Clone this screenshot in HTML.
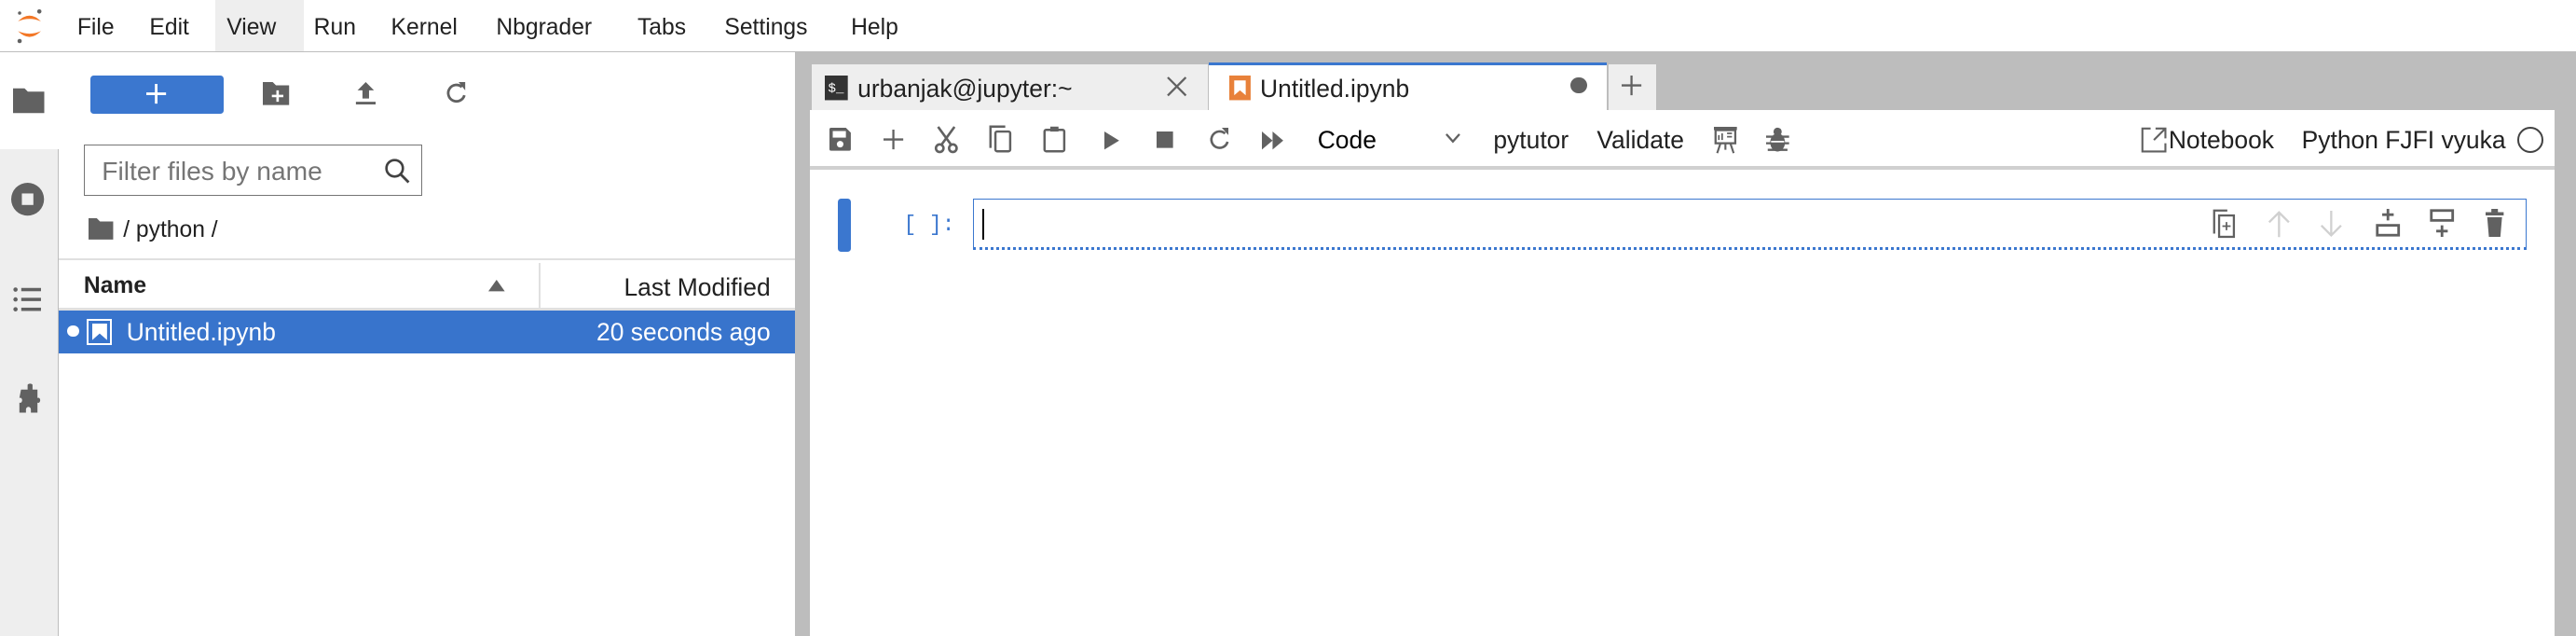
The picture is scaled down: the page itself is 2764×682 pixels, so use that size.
<!DOCTYPE html>
<html><head><meta charset="utf-8"><style>
html,body{margin:0;padding:0;width:2764px;height:682px;overflow:hidden;background:#fff}
#w{zoom:1.76276;width:1568px;height:387px;position:relative;font-family:"Liberation Sans",sans-serif;color:#212121}
.a{position:absolute}
.t{position:absolute;white-space:nowrap;font-size:14px;line-height:16px}
svg{position:absolute;overflow:visible}
</style></head><body><div id="w">
<div class="a" style="left:0;top:0;width:1568px;height:31px;background:#fff;border-bottom:1px solid #bdbdbd"></div>
<div class="a" style="left:131px;top:0;width:54px;height:31px;background:#eee"></div>
<svg style="left:8px;top:4px" width="20" height="24" viewBox="0 0 20 24"><path d="M3 9 Q10 2 17 9 Q10 6 3 9Z" fill="#f37726"/><path d="M3 15 Q10 22 17 15 Q10 18 3 15Z" fill="#f37726"/><circle cx="16" cy="3" r="1.3" fill="#616161"/><circle cx="4" cy="4" r="1" fill="#616161"/><circle cx="4" cy="21" r="1.3" fill="#616161"/></svg>
<div class="t" style="left:47px;top:9px">File</div>
<div class="t" style="left:91px;top:9px">Edit</div>
<div class="t" style="left:138px;top:9px">View</div>
<div class="t" style="left:191px;top:9px">Run</div>
<div class="t" style="left:238px;top:9px">Kernel</div>
<div class="t" style="left:302px;top:9px">Nbgrader</div>
<div class="t" style="left:388px;top:9px">Tabs</div>
<div class="t" style="left:441px;top:9px">Settings</div>
<div class="t" style="left:518px;top:9px">Help</div>
<div class="a" style="left:0;top:32px;width:36px;height:355px;background:#eee;border-right:1px solid #bdbdbd;box-sizing:border-box"></div>
<div class="a" style="left:0;top:32px;width:36px;height:59px;background:#fff"></div>
<svg style="left:8px;top:53px" width="19" height="16"><path d="M0 1h7l2 2h10v13H0z" fill="#616161"/></svg>
<svg style="left:7px;top:111px" width="20" height="20"><circle cx="10" cy="10" r="10" fill="#616161"/><rect x="6.5" y="6.5" width="7" height="7" fill="#eee"/></svg>
<svg style="left:8px;top:174px" width="18" height="16"><g fill="#616161"><circle cx="1.5" cy="2" r="1.3"/><circle cx="1.5" cy="8" r="1.3"/><circle cx="1.5" cy="14" r="1.3"/><rect x="5" y="1" width="12" height="2"/><rect x="5" y="7" width="12" height="2"/><rect x="5" y="13" width="12" height="2"/></g></svg>
<svg style="left:7px;top:232px" width="22" height="22" viewBox="0 0 22 22"><path d="M6 5h4v-3a2 2 0 0 1 3 0v3h3v5h1a2 2 0 0 1 0 3h-1v6h-4v-2a1.5 1.5 0 0 0-3 0v2h-4v-6h1a2 2 0 0 0 0-3h-1z" fill="#616161"/></svg>
<div class="a" style="left:55px;top:46px;width:81px;height:23px;background:#3b77cf;border-radius:2px"></div>
<svg style="left:89px;top:51px" width="12" height="12"><path d="M6 0v12M0 6h12" stroke="#fff" stroke-width="1.6"/></svg>
<svg style="left:160px;top:50px" width="16" height="14"><path d="M0 0h6l2 2h8v12H0z" fill="#616161"/><path d="M9 5v7M5.5 8.5h7" stroke="#fff" stroke-width="1.5"/></svg>
<svg style="left:216px;top:50px" width="13" height="14"><path d="M6.5 0l5 5h-3v5h-4v-5h-3z" fill="#616161"/><rect x="0.5" y="12" width="12" height="1.6" fill="#616161"/></svg>
<svg style="left:271px;top:50px" width="13" height="14"><path d="M10 3A5 5 0 1 0 11.5 8" fill="none" stroke="#616161" stroke-width="1.6"/><path d="M8 0h4v5z" fill="#616161"/></svg>
<div class="a" style="left:51px;top:88px;width:206px;height:31px;border:1px solid #757575;box-sizing:border-box"></div>
<div class="t" style="left:62px;top:96px;font-size:16px;color:#757575">Filter files by name</div>
<svg style="left:234px;top:96px" width="16" height="16"><circle cx="6.5" cy="6.5" r="5" fill="none" stroke="#424242" stroke-width="1.5"/><path d="M10 10l5 5" stroke="#424242" stroke-width="1.6"/></svg>
<svg style="left:54px;top:133px" width="15" height="13"><path d="M0 0h5l2 2h8v11H0z" fill="#616161"/></svg>
<div class="t" style="left:75px;top:132px">/ python /</div>
<div class="a" style="left:36px;top:157px;width:448px;height:1px;background:#e0e0e0"></div>
<div class="a" style="left:328px;top:160px;width:1px;height:27px;background:#e0e0e0"></div>
<div class="t" style="left:51px;top:166px;font-weight:bold">Name</div>
<svg style="left:297px;top:170px" width="10" height="7"><path d="M0 7L5 0L10 7z" fill="#616161"/></svg>
<div class="t" style="left:360px;top:167px;width:109px;text-align:right;font-size:15px">Last Modified</div>
<div class="a" style="left:36px;top:187px;width:448px;height:2px;background:#e0e0e0"></div>
<div class="a" style="left:36px;top:189px;width:448px;height:26px;background:#3874cc"></div>
<div class="a" style="left:41px;top:198px;width:7px;height:7px;border-radius:50%;background:#fff"></div>
<div class="a" style="left:53px;top:194px;width:15px;height:16px;border:1.5px solid #fff;box-sizing:border-box"></div>
<svg style="left:56px;top:197px" width="9" height="10"><path d="M0 0h9v10L4.5 6L0 10z" fill="#fff"/></svg>
<div class="t" style="left:77px;top:194px;color:#fff;font-size:15px">Untitled.ipynb</div>
<div class="t" style="left:340px;top:194px;width:129px;text-align:right;color:#fff;font-size:15px">20 seconds ago</div>
<div class="a" style="left:484px;top:32px;width:1084px;height:355px;background:#bdbdbd"></div>
<div class="a" style="left:493px;top:67px;width:1062px;height:320px;background:#fff"></div>
<div class="a" style="left:494px;top:39px;width:241px;height:28px;background:#eee"></div>
<svg style="left:502px;top:46px" width="14" height="15"><rect width="14" height="15" fill="#333"/><text x="2" y="10" font-size="8" fill="#fff" font-family="Liberation Mono">$_</text></svg>
<div class="t" style="left:522px;top:46px;font-size:15px">urbanjak@jupyter:~</div>
<svg style="left:711px;top:47px" width="11" height="11"><path d="M0 0l11 11M11 0L0 11" stroke="#616161" stroke-width="1.3"/></svg>
<div class="a" style="left:736px;top:38px;width:242px;height:30px;background:#fff;border-top:2px solid #3b77cf;box-sizing:border-box"></div>
<svg style="left:748px;top:46px" width="13" height="15"><rect width="13" height="15" fill="#e8813a"/><path d="M3 3h7v9L6.5 9L3 12z" fill="#fff"/></svg>
<div class="t" style="left:767px;top:46px;font-size:15px">Untitled.ipynb</div>
<div class="a" style="left:956px;top:47px;width:10px;height:10px;border-radius:50%;background:#616161"></div>
<div class="a" style="left:979px;top:39px;width:29px;height:28px;background:#eee"></div>
<svg style="left:987px;top:46px" width="12" height="12"><path d="M6 0v12M0 6h12" stroke="#616161" stroke-width="1.3"/></svg>
<div class="a" style="left:493px;top:101px;width:1062px;height:2px;background:#d0d0d0"></div>
<svg style="left:505px;top:78px" width="13" height="14"><path d="M0 1q0-1 1-1h9l3 3v10q0 1-1 1H1q-1 0-1-1z" fill="#616161"/><rect x="2" y="2" width="8" height="4" fill="#fff"/><circle cx="6.5" cy="10" r="2" fill="#fff"/></svg>
<svg style="left:538px;top:79px" width="12" height="12"><path d="M6 0v12M0 6h12" stroke="#616161" stroke-width="1.3"/></svg>
<svg style="left:569px;top:77px" width="14" height="16"><g fill="none" stroke="#616161" stroke-width="1.5"><circle cx="3" cy="13" r="2.3"/><circle cx="11" cy="13" r="2.3"/><path d="M4 11L12 0M10 11L2 0"/></g></svg>
<svg style="left:602px;top:76px" width="14" height="17"><g fill="none" stroke="#616161" stroke-width="1.4"><path d="M1 14V1h9"/><rect x="4" y="4" width="9" height="12" rx="1"/></g></svg>
<svg style="left:635px;top:76px" width="14" height="17"><g fill="none" stroke="#616161" stroke-width="1.4"><rect x="1" y="3" width="12" height="13" rx="1"/></g><rect x="4.5" y="1" width="5" height="3" fill="#616161"/></svg>
<svg style="left:672px;top:80px" width="9" height="11"><path d="M0 0l9 5.5L0 11z" fill="#616161"/></svg>
<svg style="left:704px;top:80px" width="10" height="10"><rect width="10" height="10" fill="#616161"/></svg>
<svg style="left:735px;top:78px" width="13" height="14"><path d="M10.5 3.5A5 5 0 1 0 12 8.5" fill="none" stroke="#616161" stroke-width="1.5"/><path d="M8.5 0h4v4.5z" fill="#616161"/></svg>
<svg style="left:768px;top:80px" width="13" height="11"><path d="M0 0l6.5 5.5L0 11zM6.5 0L13 5.5L6.5 11z" fill="#616161"/></svg>
<div class="t" style="left:802px;top:77px;font-size:15px;color:#000">Code</div>
<svg style="left:880px;top:81px" width="9" height="6"><path d="M0.5 0.5L4.5 5L8.5 0.5" fill="none" stroke="#616161" stroke-width="1.3"/></svg>
<div class="t" style="left:909px;top:77px;font-size:15px">pytutor</div>
<div class="t" style="left:972px;top:77px;font-size:15px">Validate</div>
<svg style="left:1043px;top:77px" width="14" height="16"><rect x="0" y="0" width="14" height="2" fill="#616161"/><rect x="1" y="2" width="12" height="8" fill="none" stroke="#616161" stroke-width="1.3"/><path d="M3 8V5M5 8V4M8 4h3M8 6h3" stroke="#616161" stroke-width="1"/><path d="M4 10L2 16M10 10L12 16M7 10v4" stroke="#616161" stroke-width="1.2"/></svg>
<svg style="left:1075px;top:77px" width="14" height="16"><ellipse cx="7" cy="9.5" rx="4.5" ry="5.5" fill="#616161"/><circle cx="7" cy="3" r="2.5" fill="#616161"/><path d="M0 6h14M0 10h14M1 14h12" stroke="#616161" stroke-width="1.3"/><path d="M3 9h8" stroke="#fff" stroke-width="1"/></svg>
<svg style="left:1303px;top:77px" width="16" height="16"><path d="M6 1H1v14h14v-5" fill="none" stroke="#616161" stroke-width="1.2"/><path d="M9 1h6v6M15 1L8 8" fill="none" stroke="#616161" stroke-width="1.2"/></svg>
<div class="t" style="left:1320px;top:77px;font-size:15px">Notebook</div>
<div class="t" style="left:1401px;top:77px;font-size:15px">Python FJFI vyuka</div>
<div class="a" style="left:1532px;top:77px;width:16px;height:16px;border-radius:50%;border:1.3px solid #424242;box-sizing:border-box"></div>
<div class="a" style="left:510px;top:121px;width:8px;height:32px;background:#3b77cf;border-radius:2px"></div>
<div class="t" style="left:550px;top:129px;font-family:'Liberation Mono',monospace;font-size:13px;color:#3b77cf">[ ]:</div>
<div class="a" style="left:592px;top:121px;width:946px;height:31px;border:1px solid #3b77cf;box-sizing:border-box;border-bottom:2px dotted #3b77cf"></div>
<div class="a" style="left:598px;top:127px;width:1px;height:19px;background:#000"></div>
<svg style="left:1347px;top:127px" width="14" height="18"><path d="M1 15V1h8" fill="none" stroke="#616161" stroke-width="1.3"/><rect x="4" y="4" width="9" height="13" fill="none" stroke="#616161" stroke-width="1.3"/><path d="M8.5 8v5M6 10.5h5" stroke="#616161" stroke-width="1"/></svg>
<svg style="left:1380px;top:128px" width="14" height="16"><path d="M7 16V1M1 7l6-6l6 6" fill="none" stroke="#d0d0d0" stroke-width="1.3"/></svg>
<svg style="left:1412px;top:128px" width="14" height="16"><path d="M7 0v15M1 9l6 6l6-6" fill="none" stroke="#d0d0d0" stroke-width="1.3"/></svg>
<svg style="left:1446px;top:127px" width="15" height="18"><path d="M7.5 0v7M4 3.5h7" stroke="#616161" stroke-width="1.6"/><rect x="1" y="10" width="13" height="6" fill="none" stroke="#616161" stroke-width="1.6"/></svg>
<svg style="left:1479px;top:127px" width="15" height="18"><rect x="1" y="1" width="13" height="6" fill="none" stroke="#616161" stroke-width="1.6"/><path d="M7.5 10v7M4 13.5h7" stroke="#616161" stroke-width="1.6"/></svg>
<svg style="left:1513px;top:127px" width="11" height="17"><rect x="0" y="2" width="11" height="2" fill="#616161"/><rect x="3.5" y="0" width="4" height="2" fill="#616161"/><path d="M1 5h9l-1 12H2z" fill="#616161"/></svg>
</div></body></html>
